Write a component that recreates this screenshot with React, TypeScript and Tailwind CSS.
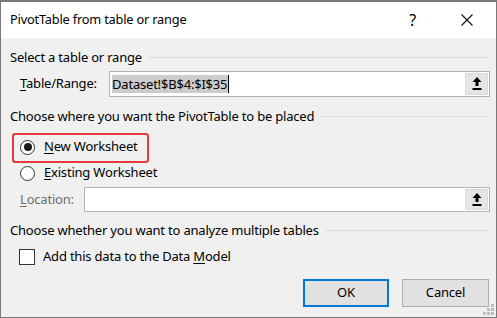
import React from 'react';

const FONT = { fontFamily: '"Segoe UI", "Noto Sans", sans-serif' };

function SectionHeader({ text }: { text: string }) {
  return (
    <div className="flex h-[20px] items-center pl-[9px] pr-[7px]">
      <span className="whitespace-nowrap text-[13px] leading-none tracking-[-0.2px] text-black">{text}</span>
      <div className="ml-[6px] h-px flex-1 bg-[#dcdcdc]" />
    </div>
  );
}

function PickerButton() {
  return (
    <div className="m-px flex w-[23px] items-center justify-center border border-[#dadada] bg-[#e5e5e5]">
      <svg width="10" height="14" viewBox="0 0 10 14">
        <polygon points="5,0 9.5,5 0.5,5" fill="#000" />
        <rect x="3.5" y="4" width="3" height="5" fill="#000" />
        <rect x="0.5" y="11" width="9" height="2" fill="#000" />
      </svg>
    </div>
  );
}

function Radio({ checked }: { checked?: boolean }) {
  return (
    <div className="flex h-[15px] w-[15px] items-center justify-center rounded-full border border-[#333] bg-white">
      {checked ? <div className="h-[8px] w-[8px] rounded-full bg-[#1a1a1a]" /> : null}
    </div>
  );
}

export default function App() {
  return (
    <div
      className="relative flex h-[318px] w-[497px] flex-col overflow-hidden border border-t-2 border-[#7a7a7a] bg-[#f0f0f0] text-[13px] tracking-[-0.2px] antialiased"
      style={FONT}
    >
      {/* title bar */}
      <div className="flex h-[36px] shrink-0 items-center bg-white pl-[9px]">
        <span className="text-[12.8px] tracking-[-0.2px] text-black">PivotTable from table or range</span>
        <span className="ml-auto mr-[45px] text-[16px] text-black">?</span>
        <svg className="mr-[23px]" width="12" height="12" viewBox="0 0 12 12">
          <path d="M0.5 0.5 L11.5 11.5 M11.5 0.5 L0.5 11.5" stroke="#111" strokeWidth="1.1" />
        </svg>
      </div>

      <div className="mt-[9px]">
        <SectionHeader text="Select a table or range" />
      </div>

      <div className="mt-[4px] flex h-[26px] items-center pr-[6px]">
        <span className="w-[108px] pl-[19px] text-black">
          <span className="underline underline-offset-2">T</span>able/Range:
        </span>
        <div className="flex h-full flex-1 border border-[#b4b4b4] bg-white">
          <div className="flex flex-1 items-center pl-[2px]">
            <span className="bg-[#cccccc] pr-[1px] leading-[18px] text-black">Dataset!$B$4:$I$35</span>
            <span className="h-[18px] w-px bg-black" />
          </div>
          <PickerButton />
        </div>
      </div>

      <div className="mt-[9px]">
        <SectionHeader text="Choose where you want the PivotTable to be placed" />
      </div>

      <div className="mt-[11px] flex h-[20px] items-center gap-[9px] pl-[19px]">
        <Radio checked />
        <span className="text-black">
          <span className="underline underline-offset-2">N</span>ew Worksheet
        </span>
      </div>
      <div className="mt-[6px] flex h-[20px] items-center gap-[9px] pl-[19px]">
        <Radio />
        <span className="text-black">
          <span className="underline underline-offset-2">E</span>xisting Worksheet
        </span>
      </div>

      {/* annotation highlight */}
      <div className="absolute left-[11px] top-[131px] h-[30px] w-[137px] rounded-[3px] border-[2.5px] border-[#e5393f]" />

      <div className="mt-[4px] flex h-[25px] items-center pr-[6px]">
        <span className="w-[83px] pl-[19px] text-[#6d6d6d]">
          <span className="underline underline-offset-2">L</span>ocation:
        </span>
        <div className="flex h-full flex-1 border border-[#b4b4b4] bg-white">
          <div className="flex-1" />
          <PickerButton />
        </div>
      </div>

      <div className="mt-[8px]">
        <SectionHeader text="Choose whether you want to analyze multiple tables" />
      </div>

      <div className="mt-[7px] flex h-[20px] items-center gap-[8px] pl-[18px]">
        <div className="h-[16px] w-[16px] border border-[#333] bg-white" />
        <span className="text-black">
          Add this data to the Data <span className="underline underline-offset-2">M</span>odel
        </span>
      </div>

      <div className="mt-[12px] flex justify-end gap-[13px] pr-[7px]">
        <button className="flex h-[28px] w-[86px] items-center justify-center border-2 border-[#0078d7] bg-[#e1e1e1] text-black">
          OK
        </button>
        <button className="flex h-[28px] w-[87px] items-center justify-center border border-[#adadad] bg-[#e1e1e1] text-black">
          Cancel
        </button>
      </div>

      {/* resize grip */}
      <svg className="absolute bottom-[1px] right-[1px]" width="12" height="12" viewBox="0 0 12 12">
        <rect x="8" y="0" width="3" height="3" fill="#bdbdbd" />
        <rect x="4" y="4" width="3" height="3" fill="#bdbdbd" />
        <rect x="8" y="4" width="3" height="3" fill="#bdbdbd" />
        <rect x="0" y="8" width="3" height="3" fill="#bdbdbd" />
        <rect x="4" y="8" width="3" height="3" fill="#bdbdbd" />
        <rect x="8" y="8" width="3" height="3" fill="#bdbdbd" />
      </svg>
    </div>
  );
}
